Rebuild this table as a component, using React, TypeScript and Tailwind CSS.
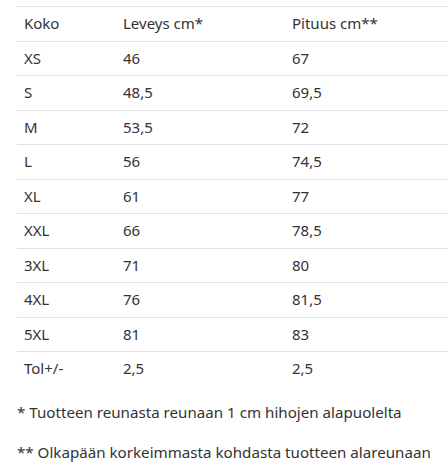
import React from 'react'

const rows = [
    ['Koko', 'Leveys cm*', 'Pituus cm**'],
    ['XS', '46', '67'],
    ['S', '48,5', '69,5'],
    ['M', '53,5', '72'],
    ['L', '56', '74,5'],
    ['XL', '61', '77'],
    ['XXL', '66', '78,5'],
    ['3XL', '71', '80'],
    ['4XL', '76', '81,5'],
    ['5XL', '81', '83'],
    ['Tol+/-', '2,5', '2,5'],
]

const App = () => {
    return (
        <div className="min-h-screen bg-white text-[#333] font-['Noto_Sans',sans-serif] pt-[6px] pl-[17px]">
            {/* Size table */}
            <table className="w-[431px] border-collapse text-[15px]">
                <tbody>
                    {rows.map((r) => (
                        <tr key={r[0]} className="border-t border-[#e2e1e6]">
                            <td className="w-[99px] px-[7px] py-[7px] leading-[19.5px]">{r[0]}</td>
                            <td className="w-[169px] px-[7px] py-[7px] leading-[19.5px]">{r[1]}</td>
                            <td className="px-[7px] py-[7px] leading-[19.5px]">{r[2]}</td>
                        </tr>
                    ))}
                </tbody>
            </table>

            {/* Footnotes */}
            <p className="text-[15.15px] leading-[20px] mt-[16px]">* Tuotteen reunasta reunaan 1 cm hihojen alapuolelta</p>
            <p className="text-[15.15px] leading-[20px] mt-[20px]">** Olkapään korkeimmasta kohdasta tuotteen alareunaan</p>
        </div>
    )
}

export default App
